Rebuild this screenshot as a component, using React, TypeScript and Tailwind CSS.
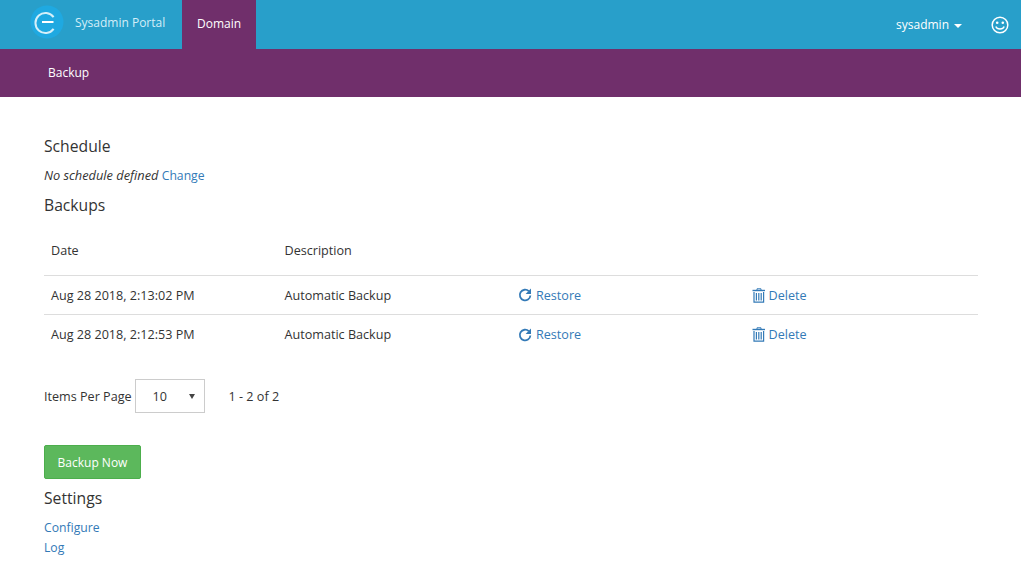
const rows = [
  { date: "Aug 28 2018, 2:13:02 PM", description: "Automatic Backup" },
  { date: "Aug 28 2018, 2:12:53 PM", description: "Automatic Backup" },
];

function Logo() {
  return (
    <svg width="34" height="34" viewBox="0 0 34 34" className="shrink-0">
      <circle cx="17" cy="17" r="16.5" fill="#1fa9e1" />
      <path d="M23.6 23.8A10 10 0 1 1 23.6 12.2" fill="none" stroke="#d4eff9" strokeWidth="2" />
      <path d="M12 17H23.5" fill="none" stroke="#ffffff" strokeWidth="2" />
    </svg>
  );
}

function RestoreIcon() {
  return (
    <svg width="14" height="14" viewBox="0 0 14 14" className="-mt-[2px] mr-[4px] shrink-0 text-[#337ab7]">
      <path d="M10.8 3.2A5.3 5.3 0 1 0 12.4 7.5" fill="none" stroke="currentColor" strokeWidth="1.8" />
      <path d="M13 0.6V6H7.6Z" fill="currentColor" />
    </svg>
  );
}

function TrashIcon() {
  return (
    <svg width="14" height="15" viewBox="0 0 14 15" className="-mt-[2px] mr-[3px] shrink-0 text-[#337ab7]">
      <path d="M5 2V0.8H9V2" fill="none" stroke="currentColor" strokeWidth="1" />
      <path d="M0.5 2.5H13" fill="none" stroke="currentColor" strokeWidth="1.4" />
      <path d="M2 4V14.2H11.6V4" fill="none" stroke="currentColor" strokeWidth="1.2" />
      <path d="M4.4 5V12.5M6.8 5V12.5M9.2 5V12.5" fill="none" stroke="currentColor" strokeWidth="1.2" />
    </svg>
  );
}

function SmileIcon() {
  return (
    <svg width="18" height="18" viewBox="0 0 18 18" className="ml-[29px] shrink-0">
      <circle cx="9" cy="9" r="7.8" fill="none" stroke="#ffffff" strokeWidth="1.5" />
      <circle cx="6.2" cy="6.8" r="1.3" fill="#ffffff" />
      <circle cx="11.8" cy="6.8" r="1.3" fill="#ffffff" />
      <path d="M4.8 10.4C6 13.8 12 13.8 13.2 10.4" fill="none" stroke="#ffffff" strokeWidth="1.4" />
    </svg>
  );
}

export default function App() {
  return (
    <div className="min-h-[566px] bg-white font-['Open_Sans',sans-serif] text-[12.6px] text-[#333333]">
      {/* Top bar */}
      <div className="flex h-[49px] items-stretch bg-[#289fca] pl-[30px] pr-[12px]">
        <div className="flex items-center pb-[5px]">
          <Logo />
          <span className="ml-[11px] w-[107px] pt-[1px] text-[12px] text-[#d4eef8]">Sysadmin Portal</span>
        </div>
        <div className="flex w-[74px] items-center justify-center bg-[#702f6b] pb-[1px] text-[12px] font-medium text-white">
          Domain
        </div>
        <div className="ml-auto flex items-center text-[12px] font-medium text-white">
          <span>sysadmin</span>
          <span className="ml-[5px] mt-[2px] h-0 w-0 border-x-[4px] border-t-[4px] border-x-transparent border-t-white" />
          <SmileIcon />
        </div>
      </div>

      {/* Sub nav */}
      <div className="flex h-[48px] items-center bg-[#702f6b] pl-[48px] text-[12px] font-medium text-white">
        Backup
      </div>

      <div className="px-[44px] pt-[39px]">
        <h2 className="text-[15.7px] leading-[20px]">Schedule</h2>
        <p className="mt-[10px] h-[18px] leading-[18px]">
          <em className="text-[12.8px]">No schedule defined</em> <a className="text-[12.2px] text-[#337ab7]">Change</a>
        </p>
        <h2 className="mt-[11px] text-[15.7px] leading-[20px]">Backups</h2>

        <table className="mt-[10px] w-[934px] table-fixed border-collapse">
          <thead>
            <tr className="border-b border-[#dddddd]">
              <th className="h-[50px] pl-[7px] pt-[4px] text-left font-normal">Date</th>
              <th className="h-[50px] pl-[7px] pt-[4px] text-left font-normal">Description</th>
              <th className="h-[50px]" />
              <th className="h-[50px]" />
            </tr>
          </thead>
          <tbody>
            {rows.map((row) => (
              <tr key={row.date} className="border-b border-[#dddddd] last:border-b-0">
                <td className="h-[39px] pl-[7px] pt-[4px]">{row.date}</td>
                <td className="h-[39px] pl-[7px] pt-[4px]">{row.description}</td>
                <td className="h-[39px] pl-[7px] pt-[4px]">
                  <a className="flex items-center text-[#337ab7]">
                    <RestoreIcon />
                    Restore
                  </a>
                </td>
                <td className="h-[39px] pl-[7px] pt-[4px]">
                  <a className="flex items-center text-[#337ab7]">
                    <TrashIcon />
                    Delete
                  </a>
                </td>
              </tr>
            ))}
          </tbody>
        </table>

        <div className="mt-[26px] flex items-center">
          <span className="pt-[2px]">Items Per Page</span>
          <div className="ml-[3px] flex h-[34px] w-[70px] items-center justify-between border border-[#cccccc] pl-[17px] pr-[9px]">
            <span className="pt-[2px]">10</span>
            <span className="h-0 w-0 border-x-[3px] border-t-[5px] border-x-transparent border-t-[#444444]" />
          </div>
          <span className="ml-[24px] pt-[2px]">1 - 2 of 2</span>
        </div>

        <button className="mt-[32px] block h-[34px] w-[97px] rounded-[2px] border border-[#4cae4c] bg-[#5cb85c] pt-[1px] text-[12px] font-medium text-white">
          Backup Now
        </button>

        <h2 className="mt-[9px] text-[15.7px] leading-[20px]">Settings</h2>
        <div className="mt-[11px] flex flex-col gap-[2px] text-[12.2px] leading-[18px] text-[#337ab7]">
          <a>Configure</a>
          <a>Log</a>
        </div>
      </div>
    </div>
  );
}
